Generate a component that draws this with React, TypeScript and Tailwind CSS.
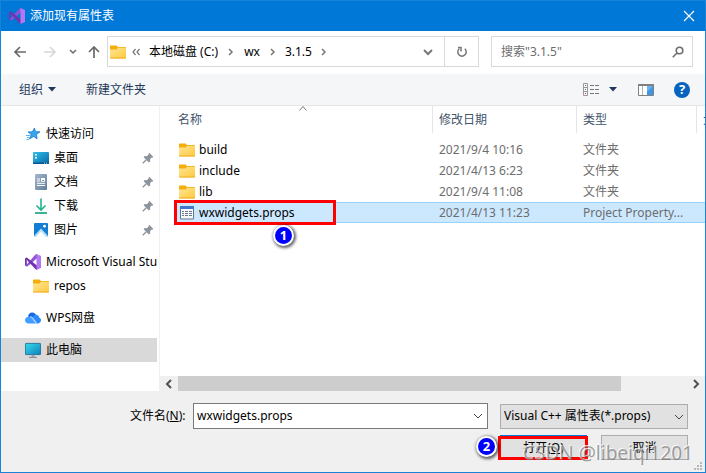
import type { ReactNode } from 'react';

interface IconProps {
  className?: string;
}

function VisualStudioIcon({ className = '' }: IconProps) {
  return (
    <svg viewBox="0 0 16 16" className={`w-4 h-4 shrink-0 ${className}`}>
      <path d="M0 4.5 1.8 3.5v9L0 11.5z" fill="#7435b5" />
      <path d="M.6 11.8 10.500.4 12 0v4.200L2.400 12.600z" fill="#9450d6" />
      <path d="M1.800 3.500 12 11.500V16L10.800 15.500.5 4.600z" fill="#7133ad" />
      <path d="M11.500 0 16 2v12l-4.500 2z" fill="#b179f1" />
    </svg>
  );
}

function FolderIcon() {
  return (
    <svg viewBox="0 0 16 14" className="w-4 h-[14px] shrink-0">
      <defs>
        <linearGradient id="folder" x1="0" y1="0" x2="1" y2="1">
          <stop offset="0" stopColor="#ffe597" />
          <stop offset="1" stopColor="#ffc93c" />
        </linearGradient>
      </defs>
      <path d="M0 1.5C0 .7.5.5 1 .5h5.5L8 2h7.2c.5 0 .8.3.8.8V6H0z" fill="#f5ad09" />
      <path d="M0 4.600h6.500L8 2.800h8v9.700c0 .6-.4 1-1 1H1c-.6 0-1-.4-1-1z" fill="url(#folder)" />
      <path d="M0 12.400h16c0 .7-.4 1.100-1 1.100H1c-.6 0-1-.4-1-1.100z" fill="#eeae26" />
    </svg>
  );
}

function StarIcon() {
  return (
    <svg viewBox="0 0 16 14" className="w-4 h-[14px] shrink-0">
      <path d="M9.500 1l1 3.700 4.500.1-3.500 2.700.6 4.400-3.400-2.500-4.200 2.600 1.700-4.400-3.100-2.700 4.200-.1z" fill="#38a4ee" stroke="#1979c9" strokeWidth=".8" />
      <path d="M1 8.500h4M2 10.500h2.500M1.500 12.500H4" stroke="#56b5f2" />
    </svg>
  );
}

function DesktopIcon() {
  return (
    <svg viewBox="0 0 16 12" className="w-4 h-3 shrink-0">
      <defs>
        <linearGradient id="desktop" x1="0" y1="0" x2="1" y2="1">
          <stop offset="0" stopColor="#2fc3e8" />
          <stop offset="1" stopColor="#0866a8" />
        </linearGradient>
      </defs>
      <rect width="16" height="12" rx="1" fill="url(#desktop)" />
      <path d="M2 2h2v1.600H2zM2 5h2v1.600H2z" fill="#fff" />
      <path d="M0 10.500h16v.5c0 .6-.4 1-1 1H1c-.6 0-1-.4-1-1z" fill="#075691" />
      <path d="M11 11.200h1M13 11.200h1" stroke="#fff" strokeWidth=".8" />
    </svg>
  );
}

function DocumentIcon() {
  return (
    <svg viewBox="0 0 16 16" className="w-4 h-4 shrink-0">
      <defs>
        <linearGradient id="document" x1="0" y1="0" x2="1" y2="1">
          <stop offset="0" stopColor="#a5b8cc" />
          <stop offset="1" stopColor="#627d9a" />
        </linearGradient>
      </defs>
      <rect x="2" width="12" height="16" rx="1" fill="url(#document)" />
      <path d="M4 5h3M4 7h3M4 9.300h8M4 11.500h8" stroke="#fff" />
      <path d="M8 4h4v3.700H8z" fill="#fff" />
      <path d="M9 6.500h2" stroke="#7f97b0" />
    </svg>
  );
}

function DownloadIcon() {
  return (
    <svg viewBox="0 0 16 16" className="w-4 h-4 shrink-0" fill="none" strokeWidth="1.600">
      <path d="M8 .5v11M3.500 7.500 8 12l4.500-4.500" stroke="#20b58b" />
      <path d="M2 15h12" stroke="#139f7c" />
    </svg>
  );
}

function PictureIcon() {
  return (
    <svg viewBox="0 0 16 14" className="w-4 h-[14px] shrink-0">
      <rect x="1" width="14" height="14" rx="1" fill="#147fd2" />
      <path d="M1 13 8 5.500l7 7.500c0 .6-.4 1-1 1H2c-.6 0-1-.4-1-1z" fill="#b8e0fa" />
      <path d="M3 14 8 8.500l5 5.500z" fill="#fff" />
      <circle cx="11.500" cy="3.200" r="1.400" fill="#fff" />
    </svg>
  );
}

function CloudIcon() {
  return (
    <svg viewBox="0 0 16 12" className="w-4 h-3 shrink-0">
      <path d="M3 4.500C3.400 2 5 .5 7.200.5c2 0 3.200 1 3.800 2.600L7.500 6z" fill="#1868e8" />
      <path d="M7 6c1-2.200 2.500-3.200 4.200-3.200 1.600 0 2.700 1.200 2.900 2.600 1.200.4 1.900 1.400 1.900 2.700 0 2-1.400 3.400-3.400 3.400H11z" fill="#2a8bfa" />
      <path d="M3.600 4.700c1.400 0 2.400.5 3.300 1.600l4.100 5.200H3.600C1.600 11.500 0 10 0 8.100s1.600-3.400 3.600-3.400z" fill="#419dff" />
      <path d="M5.500 4.500c1 .3 1.700.9 2.400 1.800l3.600 4.800" stroke="#fff" fill="none" strokeWidth=".8" />
    </svg>
  );
}

function ComputerIcon() {
  return (
    <svg viewBox="0 0 16 16" className="w-4 h-4 shrink-0">
      <defs>
        <linearGradient id="computer" x1="0" y1="0" x2="1" y2="1">
          <stop offset="0" stopColor="#35dcea" />
          <stop offset="1" stopColor="#0f7fc0" />
        </linearGradient>
      </defs>
      <rect x=".4" y="1.400" width="15.200" height="11.200" rx=".6" fill="url(#computer)" stroke="#17658e" strokeWidth=".8" />
      <path d="M6.500 13h3v2h-3z" fill="#9aa6ad" />
      <path d="M4 15.400h8" stroke="#7c8990" />
    </svg>
  );
}

function PinIcon() {
  return (
    <svg viewBox="0 0 12 12" className="w-3 h-3 shrink-0">
      <path d="M7.300.8 11.400 4.900l-1.200.8-.7-.1-1.500 1.800.2 2.200-1.200 1L1.600 5.200l1-1.100 2.200.1 1.900-1.600-.2-.7z" fill="#8b949c" />
      <path d="M4.300 7.800.8 11.300" stroke="#8b949c" strokeWidth="1.300" />
    </svg>
  );
}

function PropsFileIcon() {
  return (
    <svg viewBox="0 0 16 14" className="w-4 h-[14px] shrink-0">
      <path d="M1.500.5h13v12.500h-13z" fill="#f6f8fb" stroke="#66768d" />
      <path d="M1 0h14v3H1z" fill="#3f78c8" />
      <path d="M3 5.500h2M3 7.500h2M3 9.500h2M6 5.500h3M6 7.500h3M6 9.500h3M10 5.500h3M10 7.500h3M10 9.500h3" stroke="#68758a" />
    </svg>
  );
}

function ArrowIcon({ className = '' }: IconProps) {
  return (
    <svg viewBox="0 0 14 14" className={`w-[14px] h-[14px] ${className}`} fill="none" stroke="currentColor" strokeWidth="1.700">
      <path d="M13 7H2M7 2 2 7l5 5" />
    </svg>
  );
}

function Chevron({ className = '' }: IconProps) {
  return (
    <svg viewBox="0 0 10 10" className={`w-[10px] h-[10px] shrink-0 ${className}`} fill="none" stroke="currentColor">
      <path d="m1 3 4 4 4-4" />
    </svg>
  );
}

function CrumbArrow() {
  return (
    <svg viewBox="0 0 6 8" className="w-[6px] h-2 shrink-0" fill="none" stroke="#777" strokeWidth="1.500">
      <path d="m1 1 3 3-3 3" />
    </svg>
  );
}

function StepBadge({ step, className = '' }: { step: number; className?: string }) {
  return (
    <span
      className={`absolute flex items-center justify-center w-[21px] h-[21px] rounded-full border-2 border-white bg-[#0000fe] text-white text-[13px] leading-none font-bold font-['Noto_Sans'] shadow-[1px_1px_3px_1px_rgba(0,0,0,0.6)] ${className}`}
    >
      {step}
    </span>
  );
}

interface NavItem {
  name: string;
  icon: ReactNode;
  child?: boolean;
  pinned?: boolean;
  active?: boolean;
}

const navGroups: NavItem[][] = [
  [
    { name: '快速访问', icon: <StarIcon /> },
    { name: '桌面', icon: <DesktopIcon />, child: true, pinned: true },
    { name: '文档', icon: <DocumentIcon />, child: true, pinned: true },
    { name: '下载', icon: <DownloadIcon />, child: true, pinned: true },
    { name: '图片', icon: <PictureIcon />, child: true, pinned: true },
  ],
  [
    { name: 'Microsoft Visual Studio', icon: <VisualStudioIcon /> },
    { name: 'repos', icon: <FolderIcon />, child: true },
  ],
  [{ name: 'WPS网盘', icon: <CloudIcon /> }],
  [{ name: '此电脑', icon: <ComputerIcon />, active: true }],
];

const files = [
  { name: 'build', date: '2021/9/4 10:16', type: '文件夹', folder: true },
  { name: 'include', date: '2021/4/13 6:23', type: '文件夹', folder: true },
  { name: 'lib', date: '2021/9/4 11:08', type: '文件夹', folder: true },
  { name: 'wxwidgets.props', date: '2021/4/13 11:23', type: 'Project Property...', folder: false },
];

function TitleBar() {
  return (
    <header className="flex items-center h-[30px] pl-2 pr-[10px] bg-[#0078d7] text-white shrink-0">
      <VisualStudioIcon />
      <h1 className="flex-1 pl-[5px]">添加现有属性表</h1>
      <button type="button" aria-label="关闭">
        <svg viewBox="0 0 12 12" className="w-3 h-3" stroke="currentColor" strokeWidth="1.200">
          <path d="m1 1 10 10M11 1 1 11" />
        </svg>
      </button>
    </header>
  );
}

function AddressRow() {
  return (
    <div className="flex items-center pt-[5px] pb-[7px] px-3 shrink-0 text-[#6a6a6a]">
      <button type="button" aria-label="后退"><ArrowIcon /></button>
      <button type="button" aria-label="前进" className="ml-4 text-[#d8d8d8]"><ArrowIcon className="-scale-x-100" /></button>
      <button type="button" aria-label="最近浏览的位置" className="ml-3">
        <svg viewBox="0 0 8 8" className="w-2 h-2" fill="none" stroke="currentColor" strokeWidth="1.500"><path d="m1 2 3 3 3-3" /></svg>
      </button>
      <button type="button" aria-label="上移" className="ml-[10px]"><ArrowIcon className="rotate-90" /></button>
      <nav className="flex flex-1 items-center h-[31px] ml-[6px] pl-[2px] border border-[#d9d9d9] text-black">
        <FolderIcon />
        <svg viewBox="0 0 8 8" className="w-2 h-2 ml-[6px]" fill="none" stroke="#777" strokeWidth="1.200"><path d="M3.500 1 1 4l2.500 3M7.500 1 5 4l2.500 3" /></svg>
        <a href="#c" className="ml-[9px] mr-[10px]">本地磁盘 (C:)</a>
        <CrumbArrow />
        <a href="#wx" className="mx-[10px]">wx</a>
        <CrumbArrow />
        <a href="#version" className="mx-[9px]">3.1.5</a>
        <CrumbArrow />
        <button type="button" aria-label="以前的位置" className="ml-auto mr-[11px] text-[#777]">
          <svg viewBox="0 0 10 10" className="w-[10px] h-[10px]" fill="none" stroke="currentColor" strokeWidth="2"><path d="m1 3 4 4 4-4" /></svg>
        </button>
        <button type="button" aria-label="刷新" className="flex items-center justify-center w-[34px] h-full border-l border-[#d9d9d9] text-[#777]">
          <svg viewBox="0 0 12 12" className="w-3 h-3" fill="none" stroke="currentColor" strokeWidth="1.500">
            <path d="M8.800 2.800a4.200 4.200 0 1 1-5.600 0M2 1.500h3v4" />
          </svg>
        </button>
      </nav>
      <label className="flex items-center w-[202px] h-[31px] ml-3 pl-[9px] pr-2 border border-[#d9d9d9]">
        <input aria-label="搜索" placeholder={'搜索"3.1.5"'} className="flex-1 min-w-0 outline-none placeholder:text-[#6d6d6d]" />
        <svg viewBox="0 0 12 12" className="w-3 h-3" fill="none" stroke="#6d6d6d" strokeWidth="1.600">
          <circle cx="7.500" cy="4.500" r="3.300" />
          <path d="M5.200 6.800.8 11.200" />
        </svg>
      </label>
    </div>
  );
}

function Toolbar() {
  return (
    <div className="flex items-center h-8 pl-[18px] pr-[15px] bg-[#f5f6f7] border-b border-[#e5e5e5] text-[#1e395b] shrink-0">
      <button type="button" className="flex items-center gap-[5px]">
        组织
        <svg viewBox="0 0 8 5" className="w-2 h-[5px]" fill="currentColor"><path d="M0 0h8L4 4.500z" /></svg>
      </button>
      <button type="button" className="ml-[30px]">新建文件夹</button>
      <button type="button" aria-label="更改您的视图" className="flex items-center gap-[9px] ml-auto">
        <svg viewBox="0 0 17 13" className="w-[17px] h-[13px]" fill="none" stroke="#999">
          <path d="M.5.5h4v12h-4zM.5 4.500h4M.5 8.500h4" />
          <path d="M7 2.500h4M12 2.500h4M7 6.500h4M12 6.500h4M7 10.500h4M12 10.500h4" stroke="#777" />
          <path d="M2 2.500h1" stroke="#3a7bc4" />
          <path d="M2 6.500h1" stroke="#4a9a5a" />
          <path d="M2 10.500h1" stroke="#d03030" />
        </svg>
        <svg viewBox="0 0 8 5" className="w-2 h-[5px]" fill="currentColor"><path d="M0 0h8L4 4.500z" /></svg>
      </button>
      <button type="button" aria-label="显示预览窗格" className="ml-[21px]">
        <svg viewBox="0 0 16 12" className="w-4 h-3">
          <path d="M.5.5h15v11H.5z" fill="#fff" stroke="#808080" />
          <path d="M0 0h16v2H0z" fill="#808080" />
          <path d="M4.500 2v9" stroke="#b5b5b5" />
          <path d="M9 2h6v9H9z" fill="#3f97e3" />
          <path d="M9 2h6L9 8z" fill="#69b3f0" />
        </svg>
      </button>
      <button type="button" aria-label="获取帮助" className="flex items-center justify-center w-4 h-4 ml-5 rounded-full bg-[#0763bd] text-white text-[13px] leading-none font-bold">
        ?
      </button>
    </div>
  );
}

function Sidebar() {
  return (
    <aside className="w-[159px] shrink-0 pt-4 pr-[2px] border-r border-[#f0f0f0]">
      {navGroups.map((group, index) => (
        <ul key={index} className="mb-2">
          {group.map(item => (
            <li key={item.name} className={item.active ? 'bg-[#d9d9d9]' : ''}>
              <a href="#folder" className={`flex items-center h-6 gap-[5px] pr-[3px] overflow-hidden ${item.child ? 'pl-8' : 'pl-6'}`}>
                {item.icon}
                <span className="flex-1 min-w-0 whitespace-nowrap">{item.name}</span>
                {item.pinned && <PinIcon />}
              </a>
            </li>
          ))}
        </ul>
      ))}
    </aside>
  );
}

function FileList() {
  return (
    <main className="flex flex-1 flex-col min-w-0">
      <div className="flex-1 overflow-hidden pl-[15px]">
        <table className="w-full table-fixed border-separate border-spacing-0 text-left">
          <thead>
            <tr className="h-[27px] text-[#43546b]">
              <th className="relative w-[258px] pl-[3px] font-normal border-r border-[#e5e5e5]">
                名称
                <svg viewBox="0 0 8 5" className="absolute top-0 right-[125px] w-2 h-[5px]" fill="none" stroke="#777">
                  <path d="m.5 4.500 3.500-4 3.500 4" />
                </svg>
              </th>
              <th className="w-36 pl-[6px] font-normal border-r border-[#e5e5e5]">修改日期</th>
              <th className="w-[120px] pl-[6px] font-normal border-r border-[#e5e5e5]">类型</th>
              <th className="pl-[6px] font-normal whitespace-nowrap">大小</th>
            </tr>
          </thead>
          <tbody className="text-[#6d6d6d]">
            <tr className="h-[6px]"><td colSpan={4} /></tr>
            {files.map(file => {
              const cell = file.folder ? '' : 'bg-[#cce8ff] border-y border-[#99d1ff]';
              return (
                <tr key={file.name} className="h-[21px]">
                  <td className={`relative pl-1 ${cell}`}>
                    <div className="flex items-center gap-1 text-black">
                      {file.folder ? <FolderIcon /> : <PropsFileIcon />}
                      {file.name}
                    </div>
                    {!file.folder && (
                      <>
                        <span className="absolute -top-[3px] -left-px w-[162px] h-[25px] border-[3px] border-[#fe0000]" />
                        <StepBadge step={1} className="top-[22px] left-[98px]" />
                      </>
                    )}
                  </td>
                  <td className={`pl-[6px] ${cell}`}>{file.date}</td>
                  <td className={`pl-[6px] whitespace-nowrap ${cell}`}>{file.type}</td>
                  <td className={cell} />
                </tr>
              );
            })}
          </tbody>
        </table>
      </div>
      <div className="flex items-center h-[15px] bg-[#f0f0f0] text-[#505050]">
        <button type="button" aria-label="向左滚动" className="flex justify-center w-[18px]">
          <svg viewBox="0 0 10 10" className="w-[10px] h-[10px]" fill="none" stroke="currentColor" strokeWidth="2"><path d="M7 1 3 5l4 4" /></svg>
        </button>
        <div className="flex-1 h-full"><div className="w-[87%] h-full bg-[#cdcdcd]" /></div>
        <button type="button" aria-label="向右滚动" className="flex justify-center w-[18px]">
          <svg viewBox="0 0 10 10" className="w-[10px] h-[10px]" fill="none" stroke="currentColor" strokeWidth="2"><path d="m3 1 4 4-4 4" /></svg>
        </button>
      </div>
    </main>
  );
}

function Footer() {
  return (
    <footer className="relative py-3 pl-[129px] pr-[17px] bg-[#f0f0f0] shrink-0">
      <div className="flex items-center">
        <label htmlFor="filename" className="w-[63px] shrink-0">文件名(<u>N</u>):</label>
        <div className="flex flex-1 items-center h-[26px] pl-[3px] pr-1 bg-white border border-[#7a7a7a]">
          <input id="filename" defaultValue="wxwidgets.props" className="flex-1 min-w-0 outline-none" />
          <button type="button" aria-label="显示文件名列表" className="text-[#444]"><Chevron /></button>
        </div>
        <div className="relative w-[188px] ml-3">
          <select aria-label="文件类型" className="block w-full h-[25px] pl-[3px] appearance-none bg-[#e1e1e1] border border-[#adadad] outline-none">
            <option>Visual C++ 属性表(*.props)</option>
          </select>
          <Chevron className="absolute right-1 top-2 pointer-events-none text-[#444]" />
        </div>
      </div>
      <div className="flex justify-end gap-[14px] mt-[6px]">
        <div className="relative">
          <button type="button" className="w-[87px] h-[25px] bg-[#e1e1e1] border border-[#0078d7]">打开(<u>O</u>)</button>
          <span className="absolute top-px -left-[2px] w-[90px] h-6 border-[3px] border-[#fe0000] pointer-events-none" />
          <StepBadge step={2} className="top-px -left-[24px]" />
        </div>
        <button type="button" className="w-[87px] h-[25px] bg-[#e1e1e1] border border-[#adadad]">取消</button>
      </div>
      <span className="absolute bottom-[7px] right-[12px] text-[19px] leading-6 text-[#777]/70 [text-shadow:-1px_-1px_0_rgba(255,255,255,0.8)] pointer-events-none">
        CSDN @libeiqi1201
      </span>
      <svg viewBox="0 0 8 8" className="absolute bottom-[2px] right-[3px] w-2 h-2" fill="#b8b8b8">
        <path d="M6 0h2v2H6zM3 3h2v2H3zM6 3h2v2H6zM0 6h2v2H0zM3 6h2v2H3zM6 6h2v2H6z" />
      </svg>
    </footer>
  );
}

export default function App() {
  return (
    <div className="flex flex-col min-h-screen bg-white border border-[#1883d7] text-xs text-black font-['Noto_Sans','Noto_Sans_CJK_SC',sans-serif]">
      <TitleBar />
      <AddressRow />
      <Toolbar />
      <div className="flex flex-1">
        <Sidebar />
        <FileList />
      </div>
      <Footer />
    </div>
  );
}
